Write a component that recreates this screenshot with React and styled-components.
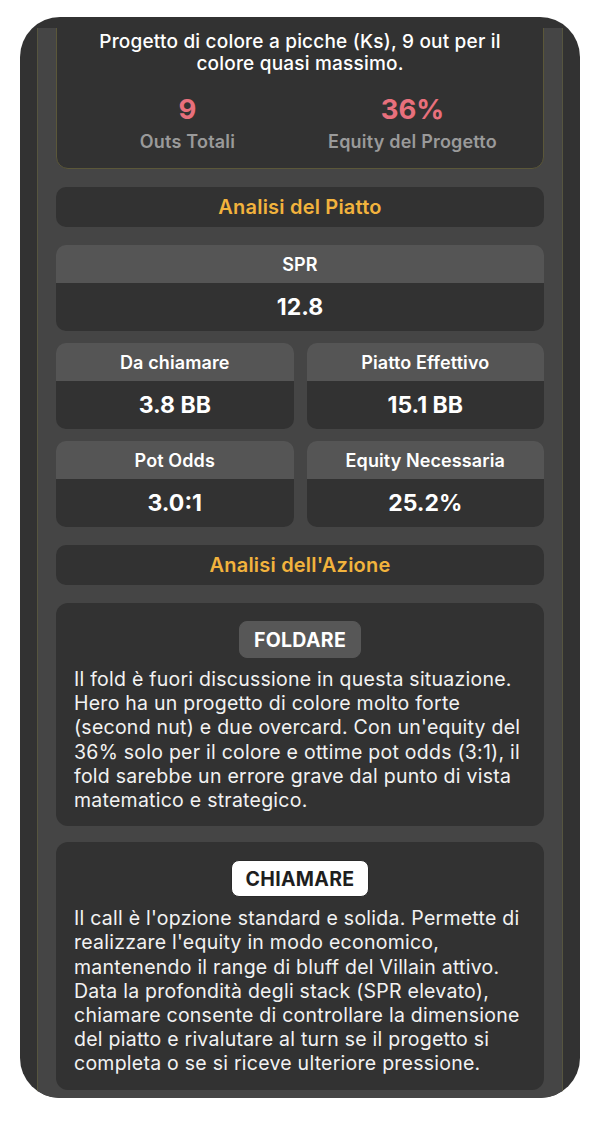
import React from "react";
import styled, { createGlobalStyle } from "styled-components";

const GlobalStyle = createGlobalStyle`
  html, body {
    margin: 0;
    padding: 0;
    background: #ffffff;
  }
  body {
    font-family: Inter, "Noto Sans", "Liberation Sans", sans-serif;
    -webkit-font-smoothing: antialiased;
  }
`;

const stats = [
  { label: "Da chiamare", value: "3.8 BB" },
  { label: "Piatto Effettivo", value: "15.1 BB" },
  { label: "Pot Odds", value: "3.0:1" },
  { label: "Equity Necessaria", value: "25.2%" }
];

const actions = [
  {
    name: "FOLDARE",
    primary: false,
    text:
      "Il fold è fuori discussione in questa situazione. Hero ha un progetto di colore molto forte (second nut) e due overcard. Con un'equity del 36% solo per il colore e ottime pot odds (3:1), il fold sarebbe un errore grave dal punto di vista matematico e strategico."
  },
  {
    name: "CHIAMARE",
    primary: true,
    text:
      "Il call è l'opzione standard e solida. Permette di realizzare l'equity in modo economico, mantenendo il range di bluff del Villain attivo. Data la profondità degli stack (SPR elevato), chiamare consente di controllare la dimensione del piatto e rivalutare al turn se il progetto si completa o se si riceve ulteriore pressione."
  }
];

export default function App() {
  return (
    <>
      <GlobalStyle />
      <Frame>
        <Panel>
          <DrawCard>
            <DrawText>
              Progetto di colore a picche (Ks), 9 out per il colore quasi
              massimo.
            </DrawText>
            <DrawStats>
              <DrawStat>
                <BigNumber>9</BigNumber>
                <DrawLabel>Outs Totali</DrawLabel>
              </DrawStat>
              <DrawStat>
                <BigNumber>36%</BigNumber>
                <DrawLabel>Equity del Progetto</DrawLabel>
              </DrawStat>
            </DrawStats>
          </DrawCard>

          <SectionTitle>Analisi del Piatto</SectionTitle>

          <StatGrid>
            <StatBox $wide>
              <StatHead>SPR</StatHead>
              <StatValue>12.8</StatValue>
            </StatBox>
            {stats.map((s) => (
              <StatBox key={s.label}>
                <StatHead>{s.label}</StatHead>
                <StatValue>{s.value}</StatValue>
              </StatBox>
            ))}
          </StatGrid>

          <SectionTitle>Analisi dell'Azione</SectionTitle>

          <ActionList>
            {actions.map((a) => (
              <ActionCard key={a.name}>
                <ActionBadge $primary={a.primary}>{a.name}</ActionBadge>
                <ActionText>{a.text}</ActionText>
              </ActionCard>
            ))}
          </ActionList>
        </Panel>
      </Frame>
    </>
  );
}

// ------- STYLES

const Frame = styled.div`
  box-sizing: border-box;
  margin: 17px 20px 0 20px;
  height: 1081px;
  padding-top: 11px;
  background: #323232;
  border-radius: 40px;
  overflow: hidden;
  display: flex;
  flex-direction: column;
`;

const Panel = styled.div`
  flex: 1;
  margin: 0 17px;
  padding: 0 18px;
  background: #454545;
  border-left: 1px solid #56553f;
  border-right: 1px solid #56553f;
  overflow: hidden;
  display: flex;
  flex-direction: column;
  gap: 18px;
`;

const DrawCard = styled.div`
  margin-top: -20px;
  padding: 22px 14px 15px;
  background: #323232;
  border: 1px solid #5b5739;
  border-radius: 12px;
  display: flex;
  flex-direction: column;
  gap: 19px;
`;

const DrawText = styled.p`
  margin: 0;
  padding: 0 26px;
  color: #ffffff;
  font-size: 19px;
  font-weight: 500;
  line-height: 22px;
  letter-spacing: 0.2px;
  text-align: center;
`;

const DrawStats = styled.div`
  display: grid;
  grid-template-columns: 1fr 1fr;
  padding: 0 4px;
`;

const DrawStat = styled.div`
  display: flex;
  flex-direction: column;
  align-items: center;
  gap: 7px;
`;

const BigNumber = styled.span`
  color: #e8707c;
  font-size: 27.5px;
  font-weight: 700;
  line-height: 30px;
`;

const DrawLabel = styled.span`
  color: #9a9a9a;
  font-size: 18px;
  font-weight: 600;
  line-height: 22px;
  letter-spacing: 0.2px;
`;

const SectionTitle = styled.div`
  height: 40px;
  background: #323232;
  border-radius: 10px;
  display: flex;
  align-items: center;
  justify-content: center;
  color: #f2b33d;
  font-size: 20px;
  font-weight: 600;
  letter-spacing: 0.2px;
`;

const StatGrid = styled.div`
  display: grid;
  grid-template-columns: 1fr 1fr;
  gap: 12px 13px;
`;

const StatBox = styled.div`
  grid-column: ${(p) => (p.$wide ? "1 / -1" : "auto")};
  border-radius: 10px;
  overflow: hidden;
  display: flex;
  flex-direction: column;
`;

const StatHead = styled.div`
  height: 38px;
  background: #555555;
  display: flex;
  align-items: center;
  justify-content: center;
  color: #ffffff;
  font-size: 18px;
  font-weight: 600;
  letter-spacing: 0.1px;
`;

const StatValue = styled.div`
  height: 48px;
  background: #323232;
  display: flex;
  align-items: center;
  justify-content: center;
  color: #ffffff;
  font-size: 23px;
  font-weight: 700;
`;

const ActionList = styled.div`
  display: flex;
  flex-direction: column;
  gap: 16px;
`;

const ActionCard = styled.div`
  padding: 18px 18px 14px;
  background: #323232;
  border-radius: 12px;
  display: flex;
  flex-direction: column;
  align-items: center;
  gap: 9px;
`;

const ActionBadge = styled.div`
  box-sizing: border-box;
  height: 37px;
  padding: 0 14px;
  border-radius: 8px;
  display: flex;
  align-items: center;
  background: ${(p) => (p.$primary ? "#ffffff" : "#575757")};
  color: ${(p) => (p.$primary ? "#1e1e1e" : "#ffffff")};
  border: 1px solid ${(p) => (p.$primary ? "#2a2a2a" : "#575757")};
  font-size: 19.5px;
  font-weight: 700;
  letter-spacing: 0.3px;
`;

const ActionText = styled.p`
  margin: 0;
  align-self: stretch;
  color: #f2f2f2;
  font-size: 19.5px;
  line-height: 24.2px;
  letter-spacing: 0.25px;
`;
